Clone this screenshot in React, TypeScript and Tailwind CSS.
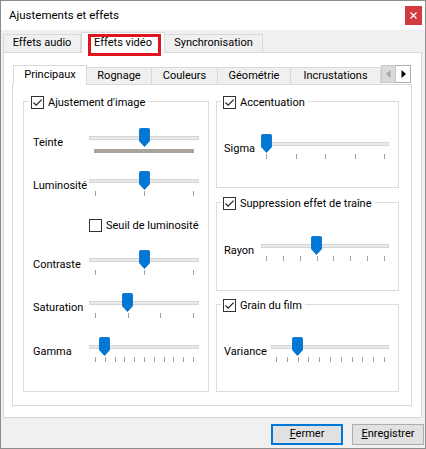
import React from 'react';

type SliderProps = {
  w: string;
  width: number;
  inset: number;
  pos: number;
  ticks?: number;
  hue?: boolean;
};

const Thumb = () => (
  <svg width="11" height="19" viewBox="0 0 11 19">
    <path d="M1.5 0.5 H9.5 A1 1 0 0 1 10.5 1.5 V13 L5.5 18.5 L0.5 13 V1.5 A1 1 0 0 1 1.5 0.5 Z" fill="#0078d7" stroke="#0069c0" strokeWidth="0.8" />
  </svg>
);

const Slider = ({ w, width, inset, pos, ticks = 0, hue }: SliderProps) => {
  const center = inset + pos * (width - 2 * inset);
  return (
    <div className={`relative h-[30px] shrink-0 ${w}`}>
      <div className="mt-[8px] h-[4px] bg-[#e7eaea] border border-[#d6d6d6]" />
      {hue ? (
        <div className="mt-[9px] mx-[5px] h-[4px] bg-[#a9a59b]" />
      ) : (
        <div className="mt-[8px] flex justify-between" style={{ paddingLeft: inset, paddingRight: inset - 1 }}>
          {Array.from({ length: ticks }).map((_, i) => (
            <div key={i} className="w-px h-[5px] bg-[#a0a0a0]" />
          ))}
        </div>
      )}
      <div className="absolute top-0" style={{ left: center - 5.5 }}>
        <Thumb />
      </div>
    </div>
  );
};

const Check = ({ checked }: { checked: boolean }) => (
  <div className="w-[13px] h-[13px] border border-[#333] bg-white flex items-center justify-center shrink-0">
    {checked && (
      <svg width="11" height="11" viewBox="0 0 11 11">
        <path d="M1.5 5.5 L4.2 8.2 L9.6 2.6" fill="none" stroke="#222" strokeWidth="1.2" />
      </svg>
    )}
  </div>
);

const Legend = ({ label, ml }: { label: string; ml: string }) => (
  <div className={`-mt-[6px] h-[13px] self-start inline-flex items-center gap-[4px] bg-white pl-[2px] pr-[3px] whitespace-nowrap ${ml}`}>
    <Check checked />
    <span className="leading-[13px]">{label}</span>
  </div>
);

const Row = ({ label, lw, mt, children }: { label: string; lw: string; mt: string; children: React.ReactNode }) => (
  <div className={`flex ${mt}`}>
    <div className={`h-[30px] pt-[1px] flex items-center shrink-0 whitespace-nowrap ${lw}`}>{label}</div>
    {children}
  </div>
);

const App = () => {
  return (
    <div className="w-[426px] h-[449px] flex flex-col bg-[#f0f0f0] border border-[#8c8c8c] overflow-hidden text-[11px] text-black font-['Roboto',sans-serif]">
      {/* title bar */}
      <div className="h-[29px] bg-white flex items-center justify-between pl-[8px]">
        <span className="text-[11.5px]">Ajustements et effets</span>
        <div className="w-[17px] h-[19px] mr-[3px] bg-[#d23b41] flex items-center justify-center">
          <svg width="7" height="7" viewBox="0 0 7 7">
            <path d="M0.5 0.5 L6.5 6.5 M6.5 0.5 L0.5 6.5" stroke="#fff" strokeWidth="1.3" />
          </svg>
        </div>
      </div>

      {/* outer tabs */}
      <div className="flex flex-col pl-[2px] pr-[3px]">
        <div className="h-[22px] flex items-end">
          <div className="w-[78px] h-[18px] flex items-center justify-center border border-b-0 border-[#d9d9d9] bg-[#f0f0f0]">Effets audio</div>
          <div className="relative z-10 w-[84px] h-[21px] -mb-px flex items-center justify-center border border-b-0 border-[#d9d9d9] bg-white">
            Effets vidéo
            <div className="absolute left-[6px] top-[1px] w-[73px] h-[22px] border-[3px] border-[#e0141e]" />
          </div>
          <div className="w-[98px] h-[18px] flex items-center justify-center border border-b-0 border-l-0 border-[#d9d9d9] bg-[#f0f0f0]">Synchronisation</div>
        </div>

        {/* outer pane */}
        <div className="h-[366px] border border-[#d9d9d9] bg-white pl-[8px] pr-[9px] pt-[12px]">
          {/* inner tabs */}
          <div className="h-[19px] flex items-end">
            <div className="relative z-10 w-[74px] h-[20px] -mb-px ml-px flex items-center justify-center border border-b-0 border-[#d9d9d9] bg-white">Principaux</div>
            <div className="w-[65px] h-[17px] flex items-center justify-center border border-b-0 border-l-0 border-[#d9d9d9] bg-[#f0f0f0]">Rognage</div>
            <div className="w-[66px] h-[17px] flex items-center justify-center border border-b-0 border-l-0 border-[#d9d9d9] bg-[#f0f0f0]">Couleurs</div>
            <div className="w-[73px] h-[17px] flex items-center justify-center border border-b-0 border-l-0 border-[#d9d9d9] bg-[#f0f0f0]">Géométrie</div>
            <div className="w-[90px] h-[17px] flex items-center justify-center border border-b-0 border-l-0 border-[#d9d9d9] bg-[#f0f0f0]">Incrustations</div>
            <div className="self-start flex h-[18px] mb-px">
              <div className="w-[15px] border border-[#c8c8c8] bg-[#dadada] flex items-center justify-center">
                <svg width="5" height="8" viewBox="0 0 5 8"><path d="M4.5 0 L0 4 L4.5 8 Z" fill="#a6a6a6" /></svg>
              </div>
              <div className="w-[15px] border border-l-0 border-[#adadad] bg-white flex items-center justify-center">
                <svg width="5" height="8" viewBox="0 0 5 8"><path d="M0.5 0 L5 4 L0.5 8 Z" fill="#000" /></svg>
              </div>
            </div>
          </div>

          {/* inner pane */}
          <div className="h-[322px] border border-[#d9d9d9] bg-white pt-[16px] pl-[10px] flex gap-[7px]">
            {/* left group */}
            <div className="w-[186px] h-[291px] border border-[#dcdcdc] flex flex-col">
              <Legend label="Ajustement d'image" ml="ml-[5px]" />
              <div className="pl-[9px] flex flex-col">
                <Row label="Teinte" lw="w-[56px]" mt="mt-[19px]">
                  <Slider w="w-[110px]" width={110} inset={6} pos={0.5} hue />
                </Row>
                <Row label="Luminosité" lw="w-[56px]" mt="mt-[13px]">
                  <Slider w="w-[110px]" width={110} inset={6} pos={0.5} ticks={3} />
                </Row>
                <div className="mt-[18px] h-[13px] ml-[56px] flex items-center gap-[4px] whitespace-nowrap">
                  <Check checked={false} />
                  <span className="leading-[13px]">Seuil de luminosité</span>
                </div>
                <Row label="Contraste" lw="w-[56px]" mt="mt-[18px]">
                  <Slider w="w-[110px]" width={110} inset={6} pos={0.5} ticks={3} />
                </Row>
                <Row label="Saturation" lw="w-[56px]" mt="mt-[13px]">
                  <Slider w="w-[110px]" width={110} inset={6} pos={1 / 3} ticks={4} />
                </Row>
                <Row label="Gamma" lw="w-[56px]" mt="mt-[14px]">
                  <Slider w="w-[110px]" width={110} inset={6} pos={0.1} ticks={11} />
                </Row>
              </div>
            </div>

            {/* right groups */}
            <div className="w-[183px] flex flex-col">
              <div className="h-[87px] border border-[#dcdcdc] flex flex-col">
                <Legend label="Accentuation" ml="ml-[4px]" />
                <div className="pl-[7px]">
                  <Row label="Sigma" lw="w-[37px]" mt="mt-[25px]">
                    <Slider w="w-[128px]" width={128} inset={5} pos={0} ticks={5} />
                  </Row>
                </div>
              </div>
              <div className="mt-[14px] h-[89px] border border-[#dcdcdc] flex flex-col">
                <Legend label="Suppression effet de traîne" ml="ml-[4px]" />
                <div className="pl-[7px]">
                  <Row label="Rayon" lw="w-[37px]" mt="mt-[26px]">
                    <Slider w="w-[128px]" width={128} inset={5} pos={3 / 7} ticks={8} />
                  </Row>
                </div>
              </div>
              <div className="mt-[13px] h-[88px] border border-[#dcdcdc] flex flex-col">
                <Legend label="Grain du film" ml="ml-[4px]" />
                <div className="pl-[7px]">
                  <Row label="Variance" lw="w-[47px]" mt="mt-[25px]">
                    <Slider w="w-[118px]" width={118} inset={5} pos={0.2} ticks={11} />
                  </Row>
                </div>
              </div>
            </div>
          </div>
        </div>
      </div>

      {/* buttons */}
      <div className="h-[30px] flex justify-end items-start pt-[6px] pr-[1px] gap-[9px]">
        <button className="w-[72px] h-[21px] border-2 border-[#0078d7] bg-[#e1e1e1] flex items-center justify-center">
          <span><u>F</u>ermer</span>
        </button>
        <button className="w-[72px] h-[21px] border border-[#adadad] bg-[#e1e1e1] flex items-center justify-center">
          <span><u>E</u>nregistrer</span>
        </button>
      </div>
    </div>
  );
};

export default App;
